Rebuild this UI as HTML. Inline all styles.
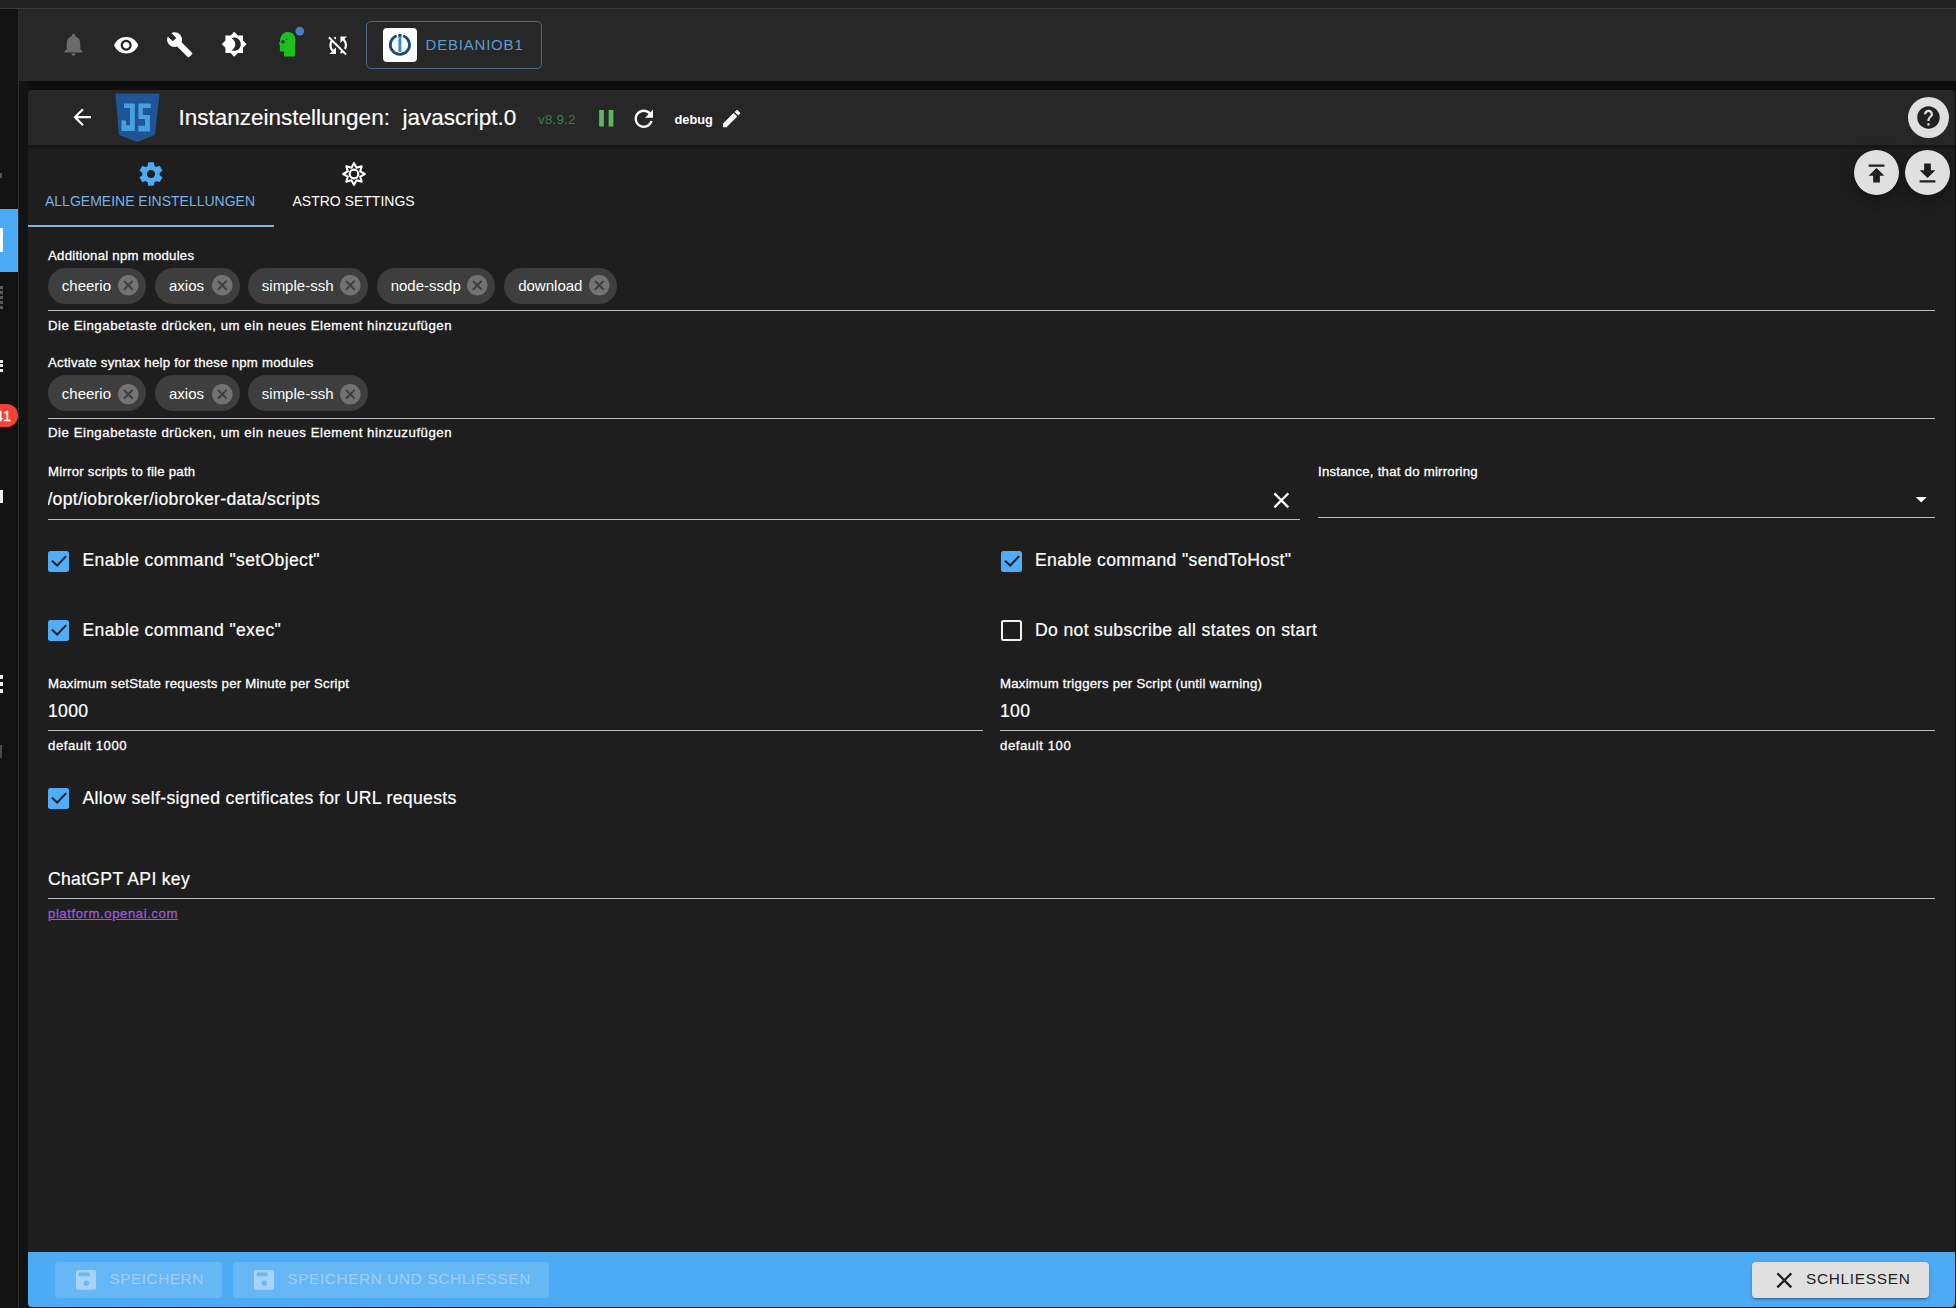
<!DOCTYPE html>
<html><head><meta charset="utf-8">
<style>
*{box-sizing:border-box;margin:0;padding:0}
html,body{width:1956px;height:1308px;overflow:hidden;background:#0e0e0e;font-family:"Liberation Sans",sans-serif;color:#fff}
.a{position:absolute}
svg{display:block}
.lbl{position:absolute;-webkit-text-stroke:0.3px #fff;font-size:13.2px;letter-spacing:0.25px;color:#fff;white-space:nowrap;line-height:1}
.help{position:absolute;-webkit-text-stroke:0.3px currentColor;font-size:13.2px;letter-spacing:0.55px;color:#fff;white-space:nowrap;line-height:1}
.val{position:absolute;-webkit-text-stroke:0.2px #fff;font-size:17.6px;letter-spacing:0.3px;color:#fff;white-space:nowrap;line-height:1}
.uline{position:absolute;height:1px;background:#bdbdbd}
.chip{position:absolute;height:36px;border-radius:18px;background:#3e3e3e;font-size:15px;line-height:1;color:#fff;white-space:nowrap}
.chip span{position:absolute;left:14px;top:0}
.chip svg{position:absolute;top:7px}
.cb{position:absolute;width:21px;height:21px}
.cbl{position:absolute;-webkit-text-stroke:0.2px #fff;font-size:17.6px;letter-spacing:0.34px;color:#fff;white-space:nowrap;line-height:1}
.btn{position:absolute;font-size:15.4px;letter-spacing:0.44px;white-space:nowrap;line-height:1}
</style></head>
<body>
<!-- top strip -->
<div class="a" style="left:0;top:0;width:1956px;height:8px;background:#212121"></div>
<div class="a" style="left:0;top:8px;width:1956px;height:1px;background:#3a3a3a"></div>
<!-- sidebar -->
<div class="a" style="left:0;top:9px;width:18px;height:1299px;background:#121212"></div>
<div class="a" style="left:18px;top:9px;width:1px;height:1299px;background:#2e2e2e"></div>
<div class="a" style="left:19px;top:81px;width:9px;height:1227px;background:#131313"></div>
<!-- app bar -->
<div class="a" style="left:19px;top:9px;width:1937px;height:72px;background:#272727"></div>

<!-- dialog -->
<div class="a" style="left:28px;top:90px;width:1927px;height:1217px;border-radius:4px;overflow:hidden;background:#1e1e1e">
  <div class="a" style="left:0;top:0;width:1927px;height:55px;background:#272727"></div>
  <div class="a" style="left:0;top:55px;width:1927px;height:4px;background:linear-gradient(#141414,#181818 60%,#1e1e1e)"></div>
  <div class="a" style="left:0;top:1162px;width:1927px;height:55px;background:#4dabf5"></div>
</div>


<!-- app bar icons -->
<svg class="a" style="left:59.5px;top:31px" width="27" height="27" viewBox="0 0 24 24"><path fill="#6b6b6b" d="M12 22c1.1 0 2-.9 2-2h-4c0 1.1.89 2 2 2zm6-6v-5c0-3.07-1.64-5.64-4.5-6.32V4c0-.83-.67-1.5-1.5-1.5s-1.5.67-1.5 1.5v.68C7.63 5.36 6 7.92 6 11v5l-2 2v1h16v-1l-2-2z"/></svg>
<svg class="a" style="left:113px;top:31.8px" width="26.4" height="26.4" viewBox="0 0 24 24"><path fill="#fff" d="M12 4.5C7 4.5 2.73 7.61 1 12c1.730 4.39 6 7.5 11 7.5s9.27-3.11 11-7.5c-1.73-4.39-6-7.5-11-7.5zM12 17c-2.76 0-5-2.24-5-5s2.24-5 5-5 5 2.24 5 5-2.240 5-5 5zm0-8c-1.66 0-3 1.34-3 3s1.34 3 3 3 3-1.34 3-3-1.34-3-3-3z"/></svg>
<svg class="a" style="left:166px;top:30.5px" width="27.5" height="27.5" viewBox="0 0 24 24"><path fill="#fff" d="M22.7 19l-9.1-9.1c.9-2.3.4-5-1.5-6.9-2-2-5-2.4-7.4-1.3L9 6 6 9 1.600 4.7C.4 7.1.9 10.1 2.9 12.1c1.9 1.9 4.6 2.4 6.9 1.5l9.1 9.1c.4.4 1 .4 1.4 0l2.3-2.3c.5-.4.5-1.1.1-1.4z"/></svg>
<svg class="a" style="left:221px;top:31.2px" width="26.4" height="26.4" viewBox="0 0 24 24"><path fill="#fff" d="M20 8.69V4h-4.69L12 .69 8.69 4H4v4.69L.69 12 4 15.31V20h4.69L12 23.31 15.31 20H20v-4.69L23.310 12 20 8.69zM12 18c-.89 0-1.74-.2-2.5-.55C11.56 16.5 13 14.42 13 12s-1.44-4.5-3.5-5.45C10.26 6.2 11.11 6 12 6c3.31 0 6 2.69 6 6s-2.69 6-6 6z"/></svg>
<svg class="a" style="left:276px;top:26px" width="30" height="34" viewBox="0 0 30 34"><g transform="translate(0,0)"><path fill="#1fbf1f" d="M4.1 14.8 L4.45 12.1 C5.5 8 8.5 5.9 11.85 5.9 C16 5.9 19.4 9 19.4 13.5 L18.9 30.6 L8.1 30.6 L8.1 25.6 L3.9 25.6 L3.9 19.5 L3.1 17.5 Z"/><ellipse cx="6.97" cy="15.85" rx="1.9" ry="1.7" fill="#063806"/><circle cx="10.67" cy="13.3" r="0.8" fill="#063806"/></g><circle cx="23.8" cy="5.1" r="4.3" fill="#4a80c4"/></svg>
<svg class="a" style="left:325px;top:32px" width="26.4" height="26.4" viewBox="0 0 24 24"><path fill="#fff" d="M10 6.35V4.26c-.8.21-1.55.54-2.23.96l1.460 1.46c.25-.12.5-.24.77-.33zm-7.14-.94l2.36 2.36C4.45 8.99 4 10.44 4 12c0 2.21.91 4.2 2.36 5.64L4 20h6v-6l-2.24 2.24C6.680 15.15 6 13.66 6 12c0-1 .25-1.94.68-2.77l8.080 8.08c-.25.13-.5.25-.77.34v2.09c.8-.21 1.55-.54 2.23-.96l2.36 2.36 1.27-1.27L4.14 4.14 2.86 5.41zM20 4h-6v6l2.24-2.24C17.32 8.85 18 10.34 18 12c0 1-.25 1.94-.68 2.77l1.46 1.46C19.55 15.01 20 13.56 20 12c0-2.21-.91-4.2-2.36-5.64L20 4z"/></svg>
<!-- host button -->
<div class="a" style="left:366px;top:21px;width:176px;height:48px;border:1px solid #4d6880;border-radius:5px"></div>
<div class="a" style="left:383px;top:28px;width:34px;height:34px;background:#fff;border-radius:4px"></div>
<svg class="a" style="left:383px;top:28px" width="34" height="34" viewBox="0 0 34 34"><path d="M13.7 7.8 A9.55 9.55 0 1 0 20.1 7.8" fill="none" stroke="#1c4a7e" stroke-width="2.9"/><rect x="15.4" y="6" width="3" height="18" fill="#3a8ccc"/><rect x="15.4" y="6" width="3" height="2.6" fill="#1c4a7e"/></svg>
<div class="a" style="left:425.5px;top:37.3px;font-size:15px;letter-spacing:0.8px;color:#5b9bd6;line-height:1;white-space:nowrap">DEBIANIOB1</div>

<!-- dialog header -->
<svg class="a" style="left:69px;top:103.5px" width="26.4" height="26.4" viewBox="0 0 24 24"><path fill="#fff" d="M20 11H7.83l5.59-5.59L12 4l-8 8 8 8 1.41-1.41L7.83 13H20v-2z"/></svg>
<svg class="a" style="left:115px;top:92.5px" width="45" height="50" viewBox="0 0 45 50"><path d="M0.3 0.5 H44.6 L40 42 L22 49 L4 42 Z" fill="#1f5596"/><path fill="#45a2de" d="M9 10.4 H19.8 V38.1 H6.5 V27.6 H11 V32.3 H15 V15 H9 Z M23.4 10.4 H35.8 V15 H27.8 V22.1 H34.9 V38.5 H23.4 V32.8 H30 V26.1 H23.4 Z"/></svg>
<div class="a" style="left:178.5px;top:107px;font-size:22.5px;color:#fff;line-height:1;-webkit-text-stroke:0.15px #fff;white-space:pre">Instanzeinstellungen:  javascript.0</div>
<div class="a" style="left:538px;top:112.5px;font-size:13.4px;letter-spacing:0.2px;color:#3b7f3e;line-height:1;white-space:nowrap">v8.9.2</div>
<svg class="a" style="left:591.9px;top:104.1px" width="28.5" height="28.5" viewBox="0 0 24 24"><path fill="#5cb85c" d="M6 19h4V5H6v14zm8-14v14h4V5h-4z"/></svg>
<svg class="a" style="left:630.4px;top:104.8px" width="27.6" height="27.6" viewBox="0 0 24 24"><path fill="#fff" d="M17.65 6.35C16.2 4.9 14.21 4 12 4c-4.42 0-7.99 3.58-7.99 8s3.57 8 7.99 8c3.73 0 6.84-2.55 7.73-6h-2.08c-.82 2.33-3.04 4-5.65 4-3.31 0-6-2.69-6-6s2.69-6 6-6c1.66 0 3.14.69 4.22 1.78L13 11h7V4l-2.35 2.35z"/></svg>
<div class="a" style="left:674.5px;top:113.6px;font-size:12.8px;font-weight:bold;color:#fff;line-height:1;white-space:nowrap">debug</div>
<svg class="a" style="left:720px;top:107.1px" width="23.2" height="23.2" viewBox="0 0 24 24"><path fill="#fff" d="M3 17.25V21h3.75L17.81 9.94l-3.75-3.75L3 17.25zM20.71 7.04c.39-.39.39-1.02 0-1.41l-2.34-2.34c-.39-.39-1.02-.39-1.41 0l-1.83 1.83 3.75 3.75 1.83-1.83z"/></svg>
<div class="a" style="left:1908px;top:97px;width:41px;height:41px;border-radius:50%;background:#e0e0e0"></div>
<svg class="a" style="left:1915px;top:104px" width="27" height="27" viewBox="0 0 24 24"><path fill="#222" d="M12 2C6.48 2 2 6.48 2 12s4.48 10 10 10 10-4.48 10-10S17.52 2 12 2zm1 17h-2v-2h2v2zm2.07-7.75l-.9.92C13.45 12.9 13 13.5 13 15h-2v-.5c0-1.1.45-2.1 1.17-2.83l1.24-1.26c.37-.36.59-.86.59-1.41 0-1.1-.9-2-2-2s-2 .9-2 2H8c0-2.21 1.79-4 4-4s4 1.790 4 4c0 .88-.36 1.68-.93 2.25z"/></svg>
<!-- tabs -->
<svg class="a" style="left:137px;top:160px" width="28" height="28" viewBox="0 0 24 24"><path fill="#4dabf5" d="M19.43 12.98c.04-.32.07-.64.07-.98s-.03-.66-.07-.98l2.11-1.65c.19-.15.24-.42.12-.64l-2-3.46c-.12-.22-.39-.3-.61-.22l-2.49 1c-.52-.4-1.08-.73-1.69-.98l-.38-2.65C14.46 2.18 14.25 2 14 2h-4c-.25 0-.46.18-.49.42l-.38 2.65c-.61.25-1.17.59-1.69.98l-2.49-1c-.23-.09-.49 0-.61.22l-2 3.46c-.13.22-.07.49.12.64l2.11 1.65c-.04.32-.07.65-.07.98s.03.66.07.98l-2.11 1.65c-.19.15-.24.42-.12.64l2 3.46c.12.22.39.3.61.22l2.49-1c.52.4 1.08.73 1.69.98l.38 2.65c.03.24.24.42.49.42h4c.25 0 .46-.18.49-.42l.38-2.650c.61-.25 1.17-.59 1.69-.98l2.49 1c.23.09.49 0 .61-.22l2-3.46c.12-.22.07-.49-.12-.64l-2.11-1.65zM12 15.5c-1.93 0-3.5-1.57-3.5-3.5s1.57-3.5 3.5-3.5 3.5 1.57 3.5 3.5-1.57 3.5-3.5 3.5z"/></svg>
<svg class="a" style="left:341px;top:161px" width="26" height="26" viewBox="0 0 26 26"><path fill="none" stroke="#fff" stroke-width="2.1" stroke-linejoin="round" d="M13.00 2.20 L15.56 6.81 L20.64 5.36 L19.19 10.44 L23.80 13.00 L19.19 15.56 L20.64 20.64 L15.56 19.19 L13.00 23.80 L10.44 19.19 L5.36 20.64 L6.81 15.56 L2.20 13.00 L6.81 10.44 L5.36 5.36 L10.44 6.81 Z"/><circle cx="13" cy="13" r="4.3" fill="none" stroke="#fff" stroke-width="2.2"/></svg>
<div class="a" style="left:45px;top:193.5px;font-size:14px;color:#78b2e6;line-height:1;white-space:nowrap">ALLGEMEINE EINSTELLUNGEN</div>
<div class="a" style="left:292.5px;top:193.5px;font-size:14px;color:#fff;line-height:1;white-space:nowrap">ASTRO SETTINGS</div>
<div class="a" style="left:28px;top:224.5px;width:246px;height:2.5px;background:#7fb2de"></div>
<!-- FABs -->
<div class="a" style="left:1854px;top:150px;width:45px;height:45px;border-radius:50%;background:#e0e0e0;box-shadow:0 3px 5px -1px rgba(0,0,0,.2),0 6px 10px 0 rgba(0,0,0,.14),0 1px 18px 0 rgba(0,0,0,.12)"></div>
<svg class="a" style="left:1863px;top:159.5px" width="27" height="27" viewBox="0 0 24 24"><path fill="#1e1e1e" d="M5 4v2h14V4H5zm0 10h4v6h6v-6h4l-7-7-7 7z"/></svg>
<div class="a" style="left:1905px;top:150px;width:45px;height:45px;border-radius:50%;background:#e0e0e0;box-shadow:0 3px 5px -1px rgba(0,0,0,.2),0 6px 10px 0 rgba(0,0,0,.14),0 1px 18px 0 rgba(0,0,0,.12)"></div>
<svg class="a" style="left:1914px;top:159.5px" width="27" height="27" viewBox="0 0 24 24"><path fill="#1e1e1e" d="M19 9h-4V3H9v6H5l7 7 7-7zM5 18v2h14v-2H5z"/></svg>
<div class="lbl" style="left:48px;top:248.8px">Additional npm modules</div>
<div class="chip" style="left:48px;top:268px;width:97.8px"><span style="left:13.8px;top:9.8px">cheerio</span><svg style="position:absolute;left:67.8px;top:5.1px" width="24.6" height="24.6" viewBox="0 0 24 24"><path fill="#737373" d="M12 2C6.47 2 2 6.47 2 12s4.47 10 10 10 10-4.47 10-10S17.53 2 12 2zm5 13.59L15.59 17 12 13.41 8.41 17 7 15.59 10.59 12 7 8.41 8.41 7 12 10.59 15.590 7 17 8.41 13.41 12 17 15.59z"/></svg></div>
<div class="chip" style="left:155.2px;top:268px;width:84.6px"><span style="left:13.8px;top:9.8px">axios</span><svg style="position:absolute;left:54.5px;top:5.1px" width="24.6" height="24.6" viewBox="0 0 24 24"><path fill="#737373" d="M12 2C6.47 2 2 6.47 2 12s4.47 10 10 10 10-4.47 10-10S17.53 2 12 2zm5 13.59L15.59 17 12 13.41 8.41 17 7 15.59 10.59 12 7 8.41 8.41 7 12 10.59 15.590 7 17 8.41 13.41 12 17 15.59z"/></svg></div>
<div class="chip" style="left:248px;top:268px;width:119.7px"><span style="left:13.8px;top:9.8px">simple-ssh</span><svg style="position:absolute;left:89.7px;top:5.1px" width="24.6" height="24.6" viewBox="0 0 24 24"><path fill="#737373" d="M12 2C6.47 2 2 6.47 2 12s4.47 10 10 10 10-4.47 10-10S17.53 2 12 2zm5 13.59L15.59 17 12 13.41 8.41 17 7 15.59 10.59 12 7 8.41 8.41 7 12 10.59 15.590 7 17 8.41 13.41 12 17 15.59z"/></svg></div>
<div class="chip" style="left:376.9px;top:268px;width:118px"><span style="left:13.8px;top:9.8px">node-ssdp</span><svg style="position:absolute;left:88.0px;top:5.1px" width="24.6" height="24.6" viewBox="0 0 24 24"><path fill="#737373" d="M12 2C6.47 2 2 6.47 2 12s4.47 10 10 10 10-4.47 10-10S17.53 2 12 2zm5 13.59L15.59 17 12 13.41 8.41 17 7 15.59 10.59 12 7 8.41 8.41 7 12 10.59 15.590 7 17 8.41 13.41 12 17 15.59z"/></svg></div>
<div class="chip" style="left:504.4px;top:268px;width:112.3px"><span style="left:13.8px;top:9.8px">download</span><svg style="position:absolute;left:82.2px;top:5.1px" width="24.6" height="24.6" viewBox="0 0 24 24"><path fill="#737373" d="M12 2C6.47 2 2 6.47 2 12s4.47 10 10 10 10-4.47 10-10S17.53 2 12 2zm5 13.59L15.59 17 12 13.41 8.41 17 7 15.59 10.59 12 7 8.41 8.41 7 12 10.59 15.590 7 17 8.41 13.41 12 17 15.59z"/></svg></div>
<div class="uline" style="left:48px;top:310px;width:1887px"></div>
<div class="help" style="left:48px;top:318.5px">Die Eingabetaste drücken, um ein neues Element hinzuzufügen</div>
<div class="lbl" style="left:48px;top:356.1px">Activate syntax help for these npm modules</div>
<div class="chip" style="left:48px;top:375.2px;width:97.8px"><span style="left:13.8px;top:11.1px">cheerio</span><svg style="position:absolute;left:67.8px;top:6.6px" width="24.6" height="24.6" viewBox="0 0 24 24"><path fill="#737373" d="M12 2C6.47 2 2 6.47 2 12s4.47 10 10 10 10-4.47 10-10S17.53 2 12 2zm5 13.59L15.59 17 12 13.41 8.41 17 7 15.59 10.59 12 7 8.41 8.41 7 12 10.59 15.590 7 17 8.41 13.41 12 17 15.59z"/></svg></div>
<div class="chip" style="left:155.2px;top:375.2px;width:84.6px"><span style="left:13.8px;top:11.1px">axios</span><svg style="position:absolute;left:54.5px;top:6.6px" width="24.6" height="24.6" viewBox="0 0 24 24"><path fill="#737373" d="M12 2C6.47 2 2 6.47 2 12s4.47 10 10 10 10-4.47 10-10S17.53 2 12 2zm5 13.59L15.59 17 12 13.41 8.41 17 7 15.59 10.59 12 7 8.41 8.41 7 12 10.59 15.590 7 17 8.41 13.41 12 17 15.59z"/></svg></div>
<div class="chip" style="left:248px;top:375.2px;width:119.7px"><span style="left:13.8px;top:11.1px">simple-ssh</span><svg style="position:absolute;left:89.7px;top:6.6px" width="24.6" height="24.6" viewBox="0 0 24 24"><path fill="#737373" d="M12 2C6.47 2 2 6.47 2 12s4.47 10 10 10 10-4.47 10-10S17.53 2 12 2zm5 13.59L15.59 17 12 13.41 8.41 17 7 15.59 10.59 12 7 8.41 8.41 7 12 10.59 15.590 7 17 8.41 13.41 12 17 15.59z"/></svg></div>
<div class="uline" style="left:48px;top:418px;width:1887px"></div>
<div class="help" style="left:48px;top:426.1px">Die Eingabetaste drücken, um ein neues Element hinzuzufügen</div>
<div class="lbl" style="left:48px;top:464.5px">Mirror scripts to file path</div>
<div class="a" style="left:48px;top:486px;width:1210px;height:26px;overflow:hidden"><div class="val" style="left:-0.6px;top:4.9px">/opt/iobroker/iobroker-data/scripts</div></div>
<svg class="a" style="left:1267.8px;top:487px" width="26.7" height="26.7" viewBox="0 0 24 24"><path fill="#fff" d="M19 6.41L17.59 5 12 10.59 6.41 5 5 6.41 10.59 12 5 17.59 6.41 19 12 13.41 17.59 19 19 17.59 13.41 12z"/></svg>
<div class="uline" style="left:48px;top:519px;width:1252px"></div>
<div class="lbl" style="left:1318px;top:464.5px">Instance, that do mirroring</div>
<svg class="a" style="left:1907.5px;top:486px" width="26.4" height="26.4" viewBox="0 0 24 24"><path fill="#fff" d="M7 10l5 5 5-5z"/></svg>
<div class="uline" style="left:1318px;top:517px;width:617px"></div>
<svg class="a" style="left:48px;top:551px" width="21" height="21" viewBox="0 0 21 21"><rect x="0" y="0" width="21" height="21" rx="2.5" fill="#50acf4"/><path d="M4 9.8 L9.2 14.6 L18.1 5.1" fill="none" stroke="#1a1e26" stroke-width="2.1"/></svg>
<div class="cbl" style="left:82.5px;top:551.6px">Enable command "setObject"</div>
<svg class="a" style="left:1001px;top:551px" width="21" height="21" viewBox="0 0 21 21"><rect x="0" y="0" width="21" height="21" rx="2.5" fill="#50acf4"/><path d="M4 9.8 L9.2 14.6 L18.1 5.1" fill="none" stroke="#1a1e26" stroke-width="2.1"/></svg>
<div class="cbl" style="left:1035px;top:551.6px">Enable command "sendToHost"</div>
<svg class="a" style="left:48px;top:620px" width="21" height="21" viewBox="0 0 21 21"><rect x="0" y="0" width="21" height="21" rx="2.5" fill="#50acf4"/><path d="M4 9.8 L9.2 14.6 L18.1 5.1" fill="none" stroke="#1a1e26" stroke-width="2.1"/></svg>
<div class="cbl" style="left:82.5px;top:621.8px">Enable command "exec"</div>
<div class="a" style="left:1001px;top:620px;width:21px;height:21px;border:2.2px solid #f2f2f2;border-radius:2.5px"></div>
<div class="cbl" style="left:1035px;top:621.8px">Do not subscribe all states on start</div>
<div class="lbl" style="left:48px;top:676.9px">Maximum setState requests per Minute per Script</div>
<div class="val" style="left:48px;top:703.4px">1000</div>
<div class="uline" style="left:48px;top:730px;width:935px"></div>
<div class="help" style="left:48px;top:738.5px">default 1000</div>
<div class="lbl" style="left:1000px;top:676.9px">Maximum triggers per Script (until warning)</div>
<div class="val" style="left:1000px;top:703.4px">100</div>
<div class="uline" style="left:1000px;top:730px;width:935px"></div>
<div class="help" style="left:1000px;top:738.5px">default 100</div>
<svg class="a" style="left:48px;top:788px" width="21" height="21" viewBox="0 0 21 21"><rect x="0" y="0" width="21" height="21" rx="2.5" fill="#50acf4"/><path d="M4 9.8 L9.2 14.6 L18.1 5.1" fill="none" stroke="#1a1e26" stroke-width="2.1"/></svg>
<div class="cbl" style="left:82.5px;top:790.4px">Allow self-signed certificates for URL requests</div>
<div class="val" style="left:48px;top:871px">ChatGPT API key</div>
<div class="uline" style="left:48px;top:898px;width:1887px"></div>
<div class="help" style="left:48px;top:906.8px;color:#9c5ad8;text-decoration:underline">platform.openai.com</div>
<div class="a" style="left:55px;top:1262px;width:167px;height:36px;border-radius:4px;background:#66b7f6"></div>
<svg class="a" style="left:76px;top:1270.2px" width="20.3" height="19.8" viewBox="0 0 20.3 19.8"><rect width="20.3" height="19.8" rx="2.6" fill="#a8d3f8"/><rect x="2.8" y="2.6" width="10.8" height="3.6" rx="0.6" fill="#69b8f6"/><circle cx="10.3" cy="13.2" r="2.7" fill="#69b8f6"/></svg>
<div class="btn" style="left:109.5px;top:1271px;color:#9fcff7;letter-spacing:0.5px">SPEICHERN</div>
<div class="a" style="left:233px;top:1262px;width:316px;height:36px;border-radius:4px;background:#66b7f6"></div>
<svg class="a" style="left:253.9px;top:1270.2px" width="20.3" height="19.8" viewBox="0 0 20.3 19.8"><rect width="20.3" height="19.8" rx="2.6" fill="#a8d3f8"/><rect x="2.8" y="2.6" width="10.8" height="3.6" rx="0.6" fill="#69b8f6"/><circle cx="10.3" cy="13.2" r="2.7" fill="#69b8f6"/></svg>
<div class="btn" style="left:287.3px;top:1271px;color:#9fcff7;letter-spacing:0.6px">SPEICHERN UND SCHLIESSEN</div>
<div class="a" style="left:1752px;top:1262px;width:177px;height:36px;border-radius:4px;background:#e0e0e0;box-shadow:0 3px 1px -2px rgba(0,0,0,.2),0 2px 2px 0 rgba(0,0,0,.14),0 1px 5px 0 rgba(0,0,0,.12)"></div>
<svg class="a" style="left:1770.7px;top:1267.1px" width="26.7" height="26.7" viewBox="0 0 24 24"><path fill="#1e1e1e" d="M19 6.41L17.59 5 12 10.59 6.41 5 5 6.41 10.59 12 5 17.59 6.41 19 12 13.41 17.59 19 19 17.59 13.41 12z"/></svg>
<div class="btn" style="left:1806px;top:1271.4px;color:#1e1e1e;letter-spacing:0.7px">SCHLIESSEN</div>
<div class="a" style="left:0;top:209px;width:18px;height:63px;background:#4dabf5"></div>
<div class="a" style="left:0;top:228px;width:3px;height:24px;background:#fff"></div>
<div class="a" style="left:-20px;top:404px;width:37.5px;height:23px;border-radius:11.5px;background:#f44336"></div>
<div class="a" style="left:-5px;top:408.5px;font-size:14.5px;color:#fff;line-height:1;-webkit-text-stroke:0.3px #fff">41</div>
<div class="a" style="left:0;top:173px;width:2px;height:5px;background:#555"></div>
<div class="a" style="left:0;top:286px;width:3px;height:24px;background:repeating-linear-gradient(#5a5a5a 0 3px,#1a1a1a 3px 5px)"></div>
<div class="a" style="left:0;top:360px;width:3px;height:12px;background:repeating-linear-gradient(#e8e8e8 0 3px,#121212 3px 4.5px)"></div>
<div class="a" style="left:0;top:490px;width:2.5px;height:13px;background:#f0f0f0"></div>
<div class="a" style="left:0;top:675px;width:3px;height:18px;background:repeating-linear-gradient(#f0f0f0 0 4px,#121212 4px 7px)"></div>
<div class="a" style="left:0;top:745px;width:2px;height:13px;background:#4a4a4a"></div>
</body></html>
